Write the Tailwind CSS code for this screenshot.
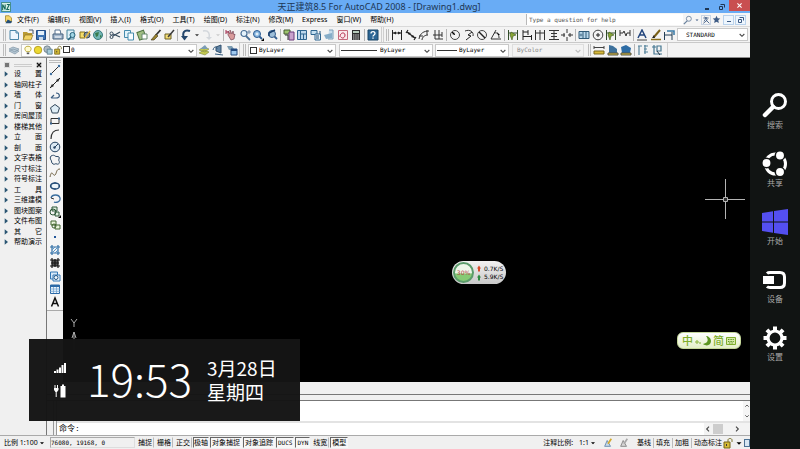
<!DOCTYPE html>
<html lang="zh-CN">
<head>
    <meta charset="UTF-8">
    <meta name="viewport" content="width=device-width, initial-scale=1.0">
    <title>天正建筑8.5 For AutoCAD 2008 - [Drawing1.dwg]</title>
    <script src="https://cdn.jsdelivr.net/npm/@tailwindcss/browser@4"></script>
</head>
<body class="h-screen flex overflow-hidden bg-black text-[7px] leading-[10px] text-black font-['Noto_Sans','Noto_Sans_CJK_SC',sans-serif]">

    <!-- Icon sprite -->
    <svg class="hidden">
        <defs>
            <symbol id="new" viewBox="0 0 12 12"><path d="M2 1.5h6l2.500 2.500v6.500H2z" fill="#eef7fd" stroke="#4a86a8"/><path d="M8 1.500v2.500h2.500" fill="none" stroke="#4a86a8"/></symbol>
            <symbol id="open" viewBox="0 0 12 12"><path d="M1 3h4l1 1h4v6H1z" fill="#b99a34"/><path d="M3 6h8l-2 5H1z" fill="#f1d263" stroke="#806a20" stroke-width=".6"/><path d="M7 1l4 0v4" fill="none" stroke="#456"/></symbol>
            <symbol id="save" viewBox="0 0 12 12"><path d="M1.500 1.500h9v9h-9z" fill="#3d74b4" stroke="#254e86"/><path d="M3 2h6v4H3z" fill="#e4f0fa"/><path d="M4 8h4v3H4z" fill="#c9d8e8"/></symbol>
            <symbol id="print" viewBox="0 0 12 12"><path d="M3 5V1h5l1 4" fill="#fff" stroke="#56718f"/><path d="M1 5h10v5H1z" fill="#a4b7cd" stroke="#48627f"/><path d="M3 8h6" stroke="#fff"/></symbol>
            <symbol id="preview" viewBox="0 0 12 12"><path d="M2 1h7v9H2z" fill="#dff0f8" stroke="#46839b"/><circle cx="7.500" cy="6" r="2.500" fill="#9fd4e3" stroke="#25617a"/><path d="M6 8l-3 3" stroke="#25617a" stroke-width="1.500"/></symbol>
            <symbol id="publish" viewBox="0 0 12 12"><path d="M1 3h5v6H1z" fill="#f5dd69" stroke="#867421"/><circle cx="8" cy="6" r="3" fill="#7e8e99" stroke="#3b4a55"/><path d="M6 9l5-7" stroke="#e3b944" stroke-width="1.500"/></symbol>
            <symbol id="globe" viewBox="0 0 12 12"><circle cx="6" cy="6" r="4.500" fill="#73b6b4" stroke="#37797f"/><path d="M3 4l4-1-1 4-2 1zM8 6l2 1-2 2z" fill="#387b4d"/></symbol>
            <symbol id="cut" viewBox="0 0 12 12"><path d="M11 3L4 7M11 8L4 5" stroke="#33495c" stroke-width="1.200"/><circle cx="2.500" cy="4.500" r="1.500" fill="none" stroke="#33495c"/><circle cx="2.500" cy="8" r="1.500" fill="none" stroke="#33495c"/></symbol>
            <symbol id="copy" viewBox="0 0 12 12"><path d="M1.500 1.500h6v7h-6z" fill="#e3f3fa" stroke="#458bad"/><path d="M5 4h5.500v7H5z" fill="#f7fcff" stroke="#458bad"/></symbol>
            <symbol id="paste" viewBox="0 0 12 12"><path d="M2 2h7v8H2z" fill="#9fbd82" stroke="#4b713f" transform="rotate(-20 6 6)"/><path d="M6 5h5v5H6z" fill="#fff" stroke="#67896e"/></symbol>
            <symbol id="brush" viewBox="0 0 12 12"><path d="M10.500 1L6 6" stroke="#333" stroke-width="1.800"/><path d="M6 5l2 2-4 4-3 0z" fill="#99822f" stroke="#3d3417" stroke-width=".6"/></symbol>
            <symbol id="edit" viewBox="0 0 12 12"><path d="M2 5h6v5H2z" fill="#f3dc74" stroke="#6d6124"/><path d="M11 1L5 8" stroke="#3a3a3a" stroke-width="1.500"/></symbol>
            <symbol id="undo" viewBox="0 0 12 12"><path d="M10 2C4 0 2 4 4 9" fill="none" stroke="#24466c" stroke-width="2"/><path d="M1 7l7 0-3.500 4.500z" fill="#24466c"/></symbol>
            <symbol id="redo" viewBox="0 0 12 12"><path d="M2 2c6-1 7 3 6 7" fill="none" stroke="#d3d7dc" stroke-width="1.500"/><path d="M5 8h6l-3 3z" fill="#d3d7dc"/></symbol>
            <symbol id="down" viewBox="0 0 12 12"><path d="M3 5h6L6 8z" fill="currentColor"/></symbol>
            <symbol id="chevron" viewBox="0 0 12 12"><path d="M2.500 4.500L6 8l3.500-3.500" fill="none" stroke="currentColor" stroke-width="1.600"/></symbol>
            <symbol id="pan" viewBox="0 0 12 12"><path d="M3 6V2l2 3V1l2 4 1-3 1 4 1-1-1 5-3 1z" fill="#d99a9a" stroke="#7b4857" stroke-width=".7"/><path d="M1 3h3M1 1v4" stroke="#a32a4c"/></symbol>
            <symbol id="zoom" viewBox="0 0 12 12"><circle cx="5" cy="4.500" r="3" fill="#e4f2fb" stroke="#4a6f96" stroke-width="1.200"/><path d="M7 7l4 4" stroke="#4a6f96" stroke-width="1.800"/><path d="M10 1v4M8 3h4" stroke="#4a6f96" stroke-width=".7"/></symbol>
            <symbol id="zoomwin" viewBox="0 0 12 12"><circle cx="5" cy="5" r="3.500" fill="#87b6e0" stroke="#2d5b91"/><path d="M3.500 5h3M5 3.500v3" stroke="#fff"/><path d="M7.500 7.500L10 10" stroke="#2d5b91" stroke-width="1.800"/><path d="M12 9v3H9z"/></symbol>
            <symbol id="zoomprev" viewBox="0 0 12 12"><circle cx="6" cy="5" r="3.500" fill="#9dbed9" stroke="#365f8f"/><path d="M8.500 7.500L11 10" stroke="#365f8f" stroke-width="1.800"/><path d="M9 1L3 4v3" fill="none" stroke="#173d6b" stroke-width="1.500"/></symbol>
            <symbol id="props" viewBox="0 0 12 12"><path d="M1 1h6v4H1z" fill="#9dc36e" stroke="#465c33"/><path d="M6 3h5v8H6z" fill="#c9a3cc" stroke="#6d3c7d"/><path d="M2 6h3v5" fill="none" stroke="#333"/></symbol>
            <symbol id="center" viewBox="0 0 12 12"><path d="M1.500 1.500h9v9h-9z" fill="#bcd7ec" stroke="#2f658f"/><path d="M4.500 1v10M5 5h5M7.500 5v5" stroke="#2f658f"/></symbol>
            <symbol id="palette" viewBox="0 0 12 12"><path d="M1 1.500h6v4H1z" fill="#c4dff0" stroke="#2f658f"/><path d="M5 5h5.500v6H5z" fill="#e8f3fa" stroke="#2f658f"/><path d="M6 7h3M6 9h3M10 2v3" stroke="#1d4d75"/></symbol>
            <symbol id="sheet" viewBox="0 0 12 12"><path d="M6 1l4 0v9H5" fill="#c8ddec" stroke="#7ca0b9"/><path d="M1 6l8-2v5l-6 1z" fill="#86adc8"/></symbol>
            <symbol id="markup" viewBox="0 0 12 12"><path d="M1.500 1.500h9v9h-9z" fill="#fbe8eb" stroke="#c4697b"/><path d="M3 8c0-5 5-5 5-2s-3 4-4 2" fill="none" stroke="#b52c4c"/></symbol>
            <symbol id="calc" viewBox="0 0 12 12"><path d="M2 1h8v10H2z" fill="#2e2e2e"/><path d="M3 2h6v2H3z" fill="#b8ccbc"/><path d="M3 6h6M3 8h6M3 10h6" stroke="#d6d6d6" stroke-dasharray="1.500 .7"/></symbol>
            <symbol id="help" viewBox="0 0 12 12"><path d="M1 1h10v10H1z" fill="#2c6695" stroke="#194466"/><path d="M4 4.500C4 2 8 2 8 4.500 8 6 6 6 6 7.500M6 8.500v1.200" fill="none" stroke="#fff" stroke-width="1.300"/></symbol>
            <symbol id="dimlin" viewBox="0 0 12 12"><path d="M1.500 1v10M10.500 1v10M2 4h8" stroke="#222"/><path d="M2 4l3-1.500v3zM10 4L7 2.500v3z" fill="#222"/></symbol>
            <symbol id="dimali" viewBox="0 0 12 12"><path d="M3 1L1 4M11 8l-2 3M2 3l8 6" stroke="#222" stroke-width="1.200"/><path d="M2 3l4 1-2 2zM10 9L8 6 6 8z" fill="#222"/></symbol>
            <symbol id="dimarc" viewBox="0 0 12 12"><path d="M1 10C2 4 6 2 11 2M4 11c0-3 3-5 6-5" fill="none" stroke="#333"/><path d="M1 7h4M9 1v5" stroke="#333"/></symbol>
            <symbol id="dimord" viewBox="0 0 12 12"><path d="M3 1v9h8M7 1v9M1 6h9M10 3v5" fill="none" stroke="#333"/></symbol>
            <symbol id="dimrad" viewBox="0 0 12 12"><circle cx="6" cy="6" r="4.500" fill="none" stroke="#444"/><path d="M6 6L3 3" stroke="#222"/><path d="M3 3l3 1-2 2z"/></symbol>
            <symbol id="dimjog" viewBox="0 0 12 12"><path d="M2 2c5-2 9 1 8 5" fill="none" stroke="#333"/><path d="M9 3L5 6l3 1-5 4" fill="none" stroke="#222"/></symbol>
            <symbol id="dimdia" viewBox="0 0 12 12"><circle cx="6" cy="6" r="4.500" fill="none" stroke="#444"/><path d="M3 3l6 6" stroke="#222" stroke-width="1.400"/></symbol>
            <symbol id="dimang" viewBox="0 0 12 12"><path d="M6 1L1 10h10M4 4c4-1 5 2 5 5" fill="none" stroke="#333"/><path d="M7 3l3 3H8z"/></symbol>
            <symbol id="dimquick" viewBox="0 0 12 12"><path d="M1.500 1v10M10.500 1v10M2 4h8" stroke="#334c2b"/><path d="M4 3l5 3-3 1-1 4-2-5z" fill="#87a534" stroke="#3c571d" stroke-width=".6"/></symbol>
            <symbol id="dimbase" viewBox="0 0 12 12"><path d="M2 1v10M10.500 6v5M7 1v5M2 3h5M2 7.500h8" stroke="#222"/></symbol>
            <symbol id="dimcont" viewBox="0 0 12 12"><path d="M1.500 1v10M6 1v10M10.500 1v10M2 4h8" stroke="#333"/></symbol>
            <symbol id="dimspace" viewBox="0 0 12 12"><path d="M1 1.500h10M1 10.500h10M3 4.500h6M3 7.500h6M6 2v8" stroke="#333"/></symbol>
            <symbol id="dimbreak" viewBox="0 0 12 12"><path d="M6 0v4M6 8v4M0 6h4M7 6h5M9 4v4M3 4v4" stroke="#333"/></symbol>
            <symbol id="tol" viewBox="0 0 12 12"><path d="M1 2.500h10v7H1z" fill="#b9d8ec" stroke="#315a78"/><path d="M5 2v8M8 2v8" stroke="#315a78"/><circle cx="3" cy="6" r="1" fill="none" stroke="#315a78" stroke-width=".7"/></symbol>
            <symbol id="cmark" viewBox="0 0 12 12"><circle cx="6" cy="6" r="4.800" fill="none" stroke="#444"/><path d="M4 6h4M6 4v4" stroke="#222"/></symbol>
            <symbol id="dimjogl" viewBox="0 0 12 12"><path d="M1 1v6M11 1v6M1 4h3l1-2 2 5 1-3h3" fill="none" stroke="#333"/></symbol>
            <symbol id="dimtedit" viewBox="0 0 12 12"><path d="M2 9L6 1l4 8M4 6h4" fill="none" stroke="#23457c" stroke-width="1.500"/><path d="M1 11h10" stroke="#444"/></symbol>
            <symbol id="dimpen" viewBox="0 0 12 12"><path d="M10 1L4 8" stroke="#7a6118" stroke-width="2"/><path d="M4 6l1 3-3 0z" fill="#222"/><path d="M1 10.500h10" stroke="#8a6f1c" stroke-width="1.500"/></symbol>
            <symbol id="dimupd" viewBox="0 0 12 12"><path d="M1.500 3v8M9 3v8M2 6h7" stroke="#223e55"/><path d="M4 2h7v4" fill="none" stroke="#3779a7" stroke-width="1.500"/></symbol>
            <symbol id="layers" viewBox="0 0 12 12"><path d="M1 7l4-2 6 2-4 3zM1 5l4-2 6 2-4 3z" fill="#b9cbd8" stroke="#7e93a3" stroke-width=".7"/></symbol>
            <symbol id="bulb" viewBox="0 0 12 12"><path d="M4 8C1 5 2 1.500 6 1.500S11 5 8 8z" fill="#fffbd0" stroke="#b39f29"/><path d="M4.500 10h3" stroke="#555" stroke-width="2"/></symbol>
            <symbol id="sun" viewBox="0 0 12 12"><circle cx="6" cy="6" r="4.500" fill="#ecd933" stroke="#b09617"/></symbol>
            <symbol id="vp" viewBox="0 0 12 12"><circle cx="5" cy="5" r="4" fill="#aebac2" stroke="#6a7d88"/><path d="M5 5h6v6H5z" fill="#a6cbd9" stroke="#597b8c"/></symbol>
            <symbol id="lock" viewBox="0 0 12 12"><path d="M6 5V3c0-2 4-2 4 0v2" fill="none" stroke="#79702a"/><path d="M2 5h6v6H2z" fill="#d3bb35" stroke="#776516"/><path d="M4.500 7v2" stroke="#433"/></symbol>
            <symbol id="lset" viewBox="0 0 12 12"><path d="M1 9l5-3 5 2-4 3zM1 6l5-3 5 2-4 3z" fill="#c3c94f" stroke="#7c8540" stroke-width=".6"/><path d="M2 5l5-4 3 4" fill="#7c9db5"/></symbol>
            <symbol id="lprev" viewBox="0 0 12 12"><path d="M4 3l5-2v8l-5-2z" fill="#6185a6" stroke="#33516e"/><path d="M1 6c1-4 4-4 4-1M3 10l8 1" fill="none" stroke="#31587b"/></symbol>
            <symbol id="lstate" viewBox="0 0 12 12"><path d="M1 2l5 0 2 3-5 1z" fill="#7c9cb1"/><path d="M5 5h6v6H5z" fill="#9fc9ef" stroke="#234b80"/><path d="M5 6h6" stroke="#234b80" stroke-width="2"/></symbol>
            <symbol id="dist" viewBox="0 0 12 12"><path d="M1 3.500h10M1 2v3M11 2v3" stroke="#444"/><path d="M1 7h10v3H1z" fill="#d6b93a" stroke="#7b691d"/></symbol>
            <symbol id="area" viewBox="0 0 12 12"><path d="M2 1l4 1 4 3v4H2z" fill="#3d719c"/><path d="M1 9h10v2H1z" fill="#d6b93a" stroke="#554"/></symbol>
            <symbol id="massp" viewBox="0 0 12 12"><path d="M1 3l5-2 5 3-1 5H2z" fill="#2d6ca5"/><path d="M1 9h10v2H1z" fill="#d6b93a" stroke="#554"/></symbol>
            <symbol id="list" viewBox="0 0 12 12"><path d="M2 2v9M1 2h4M7 2h4M7 5h3M7 8h4M8 1v9" stroke="#55839b" stroke-width="1.200"/></symbol>
            <symbol id="locate" viewBox="0 0 12 12"><path d="M3 1v9h8M1 3h4M6 2h4v5H6z" fill="none" stroke="#44768f" stroke-width="1.200"/><path d="M6 7l3 4" stroke="#234"/></symbol>
            <symbol id="line" viewBox="0 0 12 12"><path d="M2 10l8-8" stroke="#333"/><circle cx="2" cy="10" r="1.200" fill="#3d6fa0"/><circle cx="10" cy="2" r="1.200" fill="#3d6fa0"/></symbol>
            <symbol id="xline" viewBox="0 0 12 12"><path d="M1 11L11 1" stroke="#222"/><path d="M11 1L7 3l2 2zM1 11l4-2-2-2z" fill="#222"/></symbol>
            <symbol id="pline" viewBox="0 0 12 12"><path d="M2 8h5c5 0 4-5 0-5M2 8l3-3" fill="none" stroke="#3d5f82" stroke-width="1.200"/></symbol>
            <symbol id="polygon" viewBox="0 0 12 12"><path d="M6 1.500l4.500 3.300-1.700 5.200H3.200L1.500 4.800z" fill="#dfedf5" stroke="#2f4457"/></symbol>
            <symbol id="rect" viewBox="0 0 12 12"><path d="M2 3.500h8v5H2z" fill="none" stroke="#333"/><path d="M1 7.500h2v2H1zM9 2.500h2v2H9z" fill="#35618d"/></symbol>
            <symbol id="arc" viewBox="0 0 12 12"><path d="M2 11C2 5 5 2 10 2" fill="none" stroke="#333" stroke-width="1.200"/></symbol>
            <symbol id="circle" viewBox="0 0 12 12"><circle cx="6" cy="6" r="4.800" fill="#dbe9f3" stroke="#244260"/><path d="M5 7l4-4" stroke="#244260"/><circle cx="5.500" cy="6.500" r="1.200" fill="#244260"/></symbol>
            <symbol id="cloud" viewBox="0 0 12 12"><path d="M2 2c2-1 3-1 4 0s3 0 4 1-1 3 0 4 0 4-2 3-2 1-4 0-1-3-2-4-1-3 0-4z" fill="none" stroke="#2f4b68"/></symbol>
            <symbol id="spline" viewBox="0 0 12 12"><path d="M1 10c2-9 3 0 5-2s1-6 5-6" fill="none" stroke="#6b5c3d"/></symbol>
            <symbol id="ellipse" viewBox="0 0 12 12"><ellipse cx="6" cy="6" rx="4.500" ry="3" fill="#edf5fa" stroke="#234c77" stroke-width="1.300"/><path d="M6 2v2M6 8v2M1 6h2M9 6h2" stroke="#234c77"/></symbol>
            <symbol id="earc" viewBox="0 0 12 12"><path d="M2 5c1-4 8-4 9 0s-4 5-6 4" fill="none" stroke="#3b6f9f" stroke-width="1.300"/><path d="M2 5l3 1" stroke="#333"/></symbol>
            <symbol id="insert" viewBox="0 0 12 12"><path d="M3 1h5v4H3zM6 6h4v4H6z" fill="#dff0df" stroke="#2c5638"/><circle cx="4" cy="6" r="3" fill="none" stroke="#2c5638"/><path d="M12 9v3H9z"/></symbol>
            <symbol id="block" viewBox="0 0 12 12"><path d="M2 2h5v4H2zM6 6h5v4H6z" fill="#eaf4dc" stroke="#40642e"/><circle cx="5" cy="7" r="2" fill="none" stroke="#40642e"/></symbol>
            <symbol id="point" viewBox="0 0 12 12"><path d="M5 5h2v2H5z" fill="#225599"/></symbol>
            <symbol id="hatch" viewBox="0 0 12 12"><path d="M3 1v10M9 1v10M1 3h10M1 9h10" stroke="#2f6da4" stroke-width="1.200"/><path d="M3 9l6-6M3 6l3-3M6 9l3-3" stroke="#5a95c5"/></symbol>
            <symbol id="grad" viewBox="0 0 12 12"><path d="M3 3h6v6H3z" fill="#555"/><path d="M3 1v10M9 1v10M1 3h10M1 9h10M6 2v8M2 6h8" stroke="#181818" stroke-width="1.200"/></symbol>
            <symbol id="region" viewBox="0 0 12 12"><path d="M1.500 2h7v7h-7z" fill="#d7e8f7" stroke="#3277b4"/><path d="M4 5h7v6H4z" fill="#f1f8fd" stroke="#3277b4"/><circle cx="7" cy="7.500" r="2" fill="none" stroke="#235685"/></symbol>
            <symbol id="table" viewBox="0 0 12 12"><path d="M1.500 2h9v8.500h-9z" fill="#e9f3fb" stroke="#2b69a7"/><path d="M1 3h10" stroke="#2b69a7" stroke-width="2"/><path d="M1 6h10M1 8.300h10M4.500 4v6M7.500 4v6" stroke="#75a5d2" stroke-width=".8"/></symbol>
            <symbol id="mtext" viewBox="0 0 12 12"><path d="M2.500 10.500L6 2l3.500 8.500M4 7.500h4" fill="none" stroke="#111" stroke-width="1.500"/></symbol>
            <symbol id="star" viewBox="0 0 12 12"><path d="M6 1l1.500 3.300 3.500.4-2.600 2.400.7 3.600L6 9l-3.100 1.700.7-3.600L1 4.700l3.500-.4z" fill="#3c5a84"/></symbol>
            <symbol id="scale" viewBox="0 0 12 12"><path d="M2 10l3-7 4 7z" fill="#c6d9ea" stroke="#5c82a8"/><path d="M10 1L6 7" stroke="#d2a92f" stroke-width="2"/></symbol>
            <symbol id="tri" viewBox="0 0 12 12"><path d="M4 2l5 4-5 4z" fill="#2b5673"/></symbol>
        </defs>
    </svg>

    <main class="flex-1 min-w-0 flex flex-col bg-[#f0f0f0]">
        <!-- Title bar -->
        <header class="relative h-[13px] shrink-0 flex items-center bg-[#69acf5]">
            <svg class="w-2.5 h-2.5 ml-px" viewBox="0 0 12 12"><path d="M.5.5h11v11H.5z" fill="#d7efe6" stroke="#287a6c"/><path d="M2 10V3l3 6V3M7 3h3L7 9h3" fill="none" stroke="#17695c" stroke-width="1.300"/></svg>
            <h1 class="flex-1 pl-12 text-center text-[9px] leading-3 text-[#1d3654]">天正建筑8.5 For AutoCAD 2008 - [Drawing1.dwg]</h1>
            <button aria-label="最小化" class="w-[15px] h-full flex items-center justify-center"><span class="w-1 h-0.5 mt-1 bg-[#1d3654]"></span></button>
            <button aria-label="还原" class="w-[15px] h-full flex items-center justify-center"><svg class="w-1.5 h-1.5" viewBox="0 0 6 6"><path d="M1.500.5h4v3M.5 2.500h3v3h-3z" fill="none" stroke="#1d3654"/></svg></button>
            <button aria-label="关闭" class="w-[21px] h-[11px] self-start flex items-center justify-center bg-[#c94f50]"><svg class="w-[5px] h-[5px]" viewBox="0 0 6 6"><path d="M.5.5l5 5M5.500.5l-5 5" stroke="#fff" stroke-width="1.300"/></svg></button>
        </header>

        <!-- Menu bar -->
        <nav class="h-[13px] shrink-0 flex items-center bg-[#f5f5f5]">
            <svg class="w-[9px] h-[9px] ml-1 mr-1" viewBox="0 0 12 12"><path d="M2 1h5l3 3v5H2z" fill="#f7d568" stroke="#9b7d22"/><path d="M5 6l6 3-2 2H2z" fill="#254e76"/></svg>
            <div class="flex gap-[9px] whitespace-nowrap">
                <button>文件(F)</button><button>编辑(E)</button><button>视图(V)</button><button>插入(I)</button><button>格式(O)</button><button>工具(T)</button><button>绘图(D)</button><button>标注(N)</button><button>修改(M)</button><button>Express</button><button>窗口(W)</button><button>帮助(H)</button>
            </div>
            <input type="text" aria-label="帮助搜索" placeholder="Type a question for help" class="ml-auto w-[157px] h-[11px] px-0.5 bg-white border-l border-[#b8b8b8] text-[6px] font-['DejaVu_Sans_Mono',monospace] placeholder:text-[#555]">
            <div class="flex items-center gap-px pr-1 text-[#3c5a84]">
                <button aria-label="搜索" class="w-2.5"><svg class="w-2.5 h-2.5" viewBox="0 0 12 12"><circle cx="7" cy="4.500" r="3" fill="none" stroke="#69809c"/><path d="M5 7l-4 4" stroke="#69809c" stroke-width="1.500"/></svg></button>
                <button aria-label="搜索选项"><svg class="w-1.5 h-1.5"><use href="#down"/></svg></button>
                <button aria-label="通讯中心" class="w-2.5 h-2.5 border border-[#c8d4e4]"><svg class="w-2 h-2" viewBox="0 0 12 12"><path d="M2 3h8M4 1l4 5-6 5M6 6l5 5M7 2l-4 6" stroke="#3c5a84" fill="none" stroke-width="1.300"/></svg></button>
                <button aria-label="收藏夹" class="w-2.5"><svg class="w-[9px] h-[9px]"><use href="#star"/></svg></button>
                <button aria-label="最小化图形" class="w-[11px] h-2.5 border border-[#b9d2ec] bg-[#eef6fd] flex items-center justify-center"><span class="w-1 h-px mt-1 bg-[#3c5a84]"></span></button>
                <button aria-label="还原图形" class="w-[11px] h-2.5 border border-[#b9d2ec] bg-[#eef6fd] flex items-center justify-center"><svg class="w-1.5 h-1.5" viewBox="0 0 6 6"><path d="M1.500.5h4v3M.5 2.500h3v3h-3z" fill="none" stroke="#3c5a84"/></svg></button>
            </div>
        </nav>

        <!-- Standard and dimension toolbars -->
        <div class="h-4 shrink-0 flex items-center border-t border-[#d9d9d9] bg-[#f3f3f3]" role="toolbar" aria-label="标准">
            <span class="w-[3px] h-3 mx-[3px] mr-0.5 border-x border-[#bdbdbd]"></span>
            <div class="w-[39px] flex justify-between">
                <button aria-label="新建"><svg class="w-3 h-3"><use href="#new"/></svg></button>
                <button aria-label="打开"><svg class="w-3 h-3"><use href="#open"/></svg></button>
                <button aria-label="保存"><svg class="w-3 h-3"><use href="#save"/></svg></button>
            </div>
            <span class="w-px h-3 mx-0.5 bg-[#b5b5b5]"></span>
            <div class="w-[52px] flex justify-between">
                <button aria-label="打印"><svg class="w-3 h-3"><use href="#print"/></svg></button>
                <button aria-label="打印预览"><svg class="w-3 h-3"><use href="#preview"/></svg></button>
                <button aria-label="发布"><svg class="w-3 h-3"><use href="#publish"/></svg></button>
                <button aria-label="三维"><svg class="w-3 h-3"><use href="#globe"/></svg></button>
            </div>
            <span class="w-px h-3 mx-0.5 bg-[#b5b5b5]"></span>
            <div class="w-[66px] flex justify-between">
                <button aria-label="剪切"><svg class="w-3 h-3"><use href="#cut"/></svg></button>
                <button aria-label="复制"><svg class="w-3 h-3"><use href="#copy"/></svg></button>
                <button aria-label="粘贴"><svg class="w-3 h-3"><use href="#paste"/></svg></button>
                <button aria-label="特性匹配"><svg class="w-3 h-3"><use href="#brush"/></svg></button>
                <button aria-label="块编辑器"><svg class="w-3 h-3"><use href="#edit"/></svg></button>
            </div>
            <span class="w-px h-3 mx-0.5 bg-[#b5b5b5]"></span>
            <div class="w-[42px] flex items-center justify-between text-[#333]">
                <button aria-label="放弃"><svg class="w-3 h-3"><use href="#undo"/></svg></button>
                <button aria-label="放弃列表"><svg class="w-2 h-2"><use href="#down"/></svg></button>
                <button aria-label="重做"><svg class="w-3 h-3"><use href="#redo"/></svg></button>
                <button aria-label="重做列表" class="text-[#ccc]"><svg class="w-2 h-2"><use href="#down"/></svg></button>
            </div>
            <span class="w-px h-3 mx-px bg-[#b5b5b5]"></span>
            <div class="w-[53px] flex justify-between">
                <button aria-label="平移"><svg class="w-3 h-3"><use href="#pan"/></svg></button>
                <button aria-label="实时缩放"><svg class="w-3 h-3"><use href="#zoom"/></svg></button>
                <button aria-label="窗口缩放"><svg class="w-3 h-3"><use href="#zoomwin"/></svg></button>
                <button aria-label="缩放上一个"><svg class="w-3 h-3"><use href="#zoomprev"/></svg></button>
            </div>
            <span class="w-px h-3 mx-0.5 bg-[#b5b5b5]"></span>
            <div class="w-[79px] flex justify-between">
                <button aria-label="特性"><svg class="w-3 h-3"><use href="#props"/></svg></button>
                <button aria-label="设计中心"><svg class="w-3 h-3"><use href="#center"/></svg></button>
                <button aria-label="工具选项板"><svg class="w-3 h-3"><use href="#palette"/></svg></button>
                <button aria-label="图纸集"><svg class="w-3 h-3"><use href="#sheet"/></svg></button>
                <button aria-label="标记集"><svg class="w-3 h-3"><use href="#markup"/></svg></button>
                <button aria-label="计算器"><svg class="w-3 h-3"><use href="#calc"/></svg></button>
            </div>
            <span class="w-px h-3 mx-0.5 bg-[#b5b5b5]"></span>
            <button aria-label="帮助"><svg class="w-3 h-3"><use href="#help"/></svg></button>
            <span class="w-[3px] h-full mx-0.5 border-x border-[#cfcfcf]"></span>
            <span class="w-[3px] h-3 mr-0.5 border-x border-[#bdbdbd]"></span>
            <div class="w-[53px] flex justify-between">
                <button aria-label="线性"><svg class="w-3 h-3"><use href="#dimlin"/></svg></button>
                <button aria-label="对齐"><svg class="w-3 h-3"><use href="#dimali"/></svg></button>
                <button aria-label="弧长"><svg class="w-3 h-3"><use href="#dimarc"/></svg></button>
                <button aria-label="坐标"><svg class="w-3 h-3"><use href="#dimord"/></svg></button>
            </div>
            <span class="w-px h-3 mx-0.5 bg-[#b5b5b5]"></span>
            <div class="w-[53px] flex justify-between">
                <button aria-label="半径"><svg class="w-3 h-3"><use href="#dimrad"/></svg></button>
                <button aria-label="折弯"><svg class="w-3 h-3"><use href="#dimjog"/></svg></button>
                <button aria-label="直径"><svg class="w-3 h-3"><use href="#dimdia"/></svg></button>
                <button aria-label="角度"><svg class="w-3 h-3"><use href="#dimang"/></svg></button>
            </div>
            <span class="w-px h-3 mx-0.5 bg-[#b5b5b5]"></span>
            <div class="w-[66px] flex justify-between">
                <button aria-label="快速标注"><svg class="w-3 h-3"><use href="#dimquick"/></svg></button>
                <button aria-label="基线标注"><svg class="w-3 h-3"><use href="#dimbase"/></svg></button>
                <button aria-label="连续标注"><svg class="w-3 h-3"><use href="#dimcont"/></svg></button>
                <button aria-label="标注间距"><svg class="w-3 h-3"><use href="#dimspace"/></svg></button>
                <button aria-label="标注打断"><svg class="w-3 h-3"><use href="#dimbreak"/></svg></button>
            </div>
            <span class="w-px h-3 mx-0.5 bg-[#b5b5b5]"></span>
            <div class="w-[53px] flex justify-between">
                <button aria-label="公差"><svg class="w-3 h-3"><use href="#tol"/></svg></button>
                <button aria-label="圆心标记"><svg class="w-3 h-3"><use href="#cmark"/></svg></button>
                <button aria-label="检验"><svg class="w-3 h-3"><use href="#dimquick"/></svg></button>
                <button aria-label="折弯线性"><svg class="w-3 h-3"><use href="#dimjogl"/></svg></button>
            </div>
            <span class="w-px h-3 mx-0.5 bg-[#b5b5b5]"></span>
            <div class="w-[39px] flex justify-between">
                <button aria-label="编辑标注"><svg class="w-3 h-3"><use href="#dimtedit"/></svg></button>
                <button aria-label="编辑标注文字"><svg class="w-3 h-3"><use href="#dimpen"/></svg></button>
                <button aria-label="标注更新"><svg class="w-3 h-3"><use href="#dimupd"/></svg></button>
            </div>
            <div class="relative flex-1 min-w-0 h-[13px] ml-0.5 mr-0.5">
                <select aria-label="标注样式" class="appearance-none w-full h-full pl-2 bg-white border border-[#c9c9c9] text-[6px] font-['DejaVu_Sans_Mono',monospace]"><option>STANDARD</option></select>
                <svg class="absolute right-0.5 top-[3px] w-2 h-2 pointer-events-none text-[#444]"><use href="#chevron"/></svg>
            </div>
        </div>

        <!-- Layer and property toolbars -->
        <div class="h-4 shrink-0 flex items-center border-t border-[#c9c9c9] border-b border-b-[#8c8c8c] text-[6px] bg-[#f3f3f3] font-['DejaVu_Sans_Mono',monospace]" role="toolbar" aria-label="图层">
            <span class="w-[3px] h-3 mx-[3px] mr-0.5 border-x border-[#bdbdbd]"></span>
            <button aria-label="图层特性管理器"><svg class="w-3 h-3"><use href="#layers"/></svg></button>
            <div class="relative w-[176px] h-[13px] ml-px">
                <select aria-label="当前图层" class="appearance-none w-full h-full pl-[49px] bg-white border border-[#c9c9c9]"><option>0</option></select>
                <div class="absolute left-0.5 top-px flex items-center pointer-events-none">
                    <svg class="w-2.5 h-2.5"><use href="#bulb"/></svg><svg class="w-2.5 h-2.5"><use href="#sun"/></svg><svg class="w-2.5 h-2.5"><use href="#vp"/></svg><svg class="w-2.5 h-2.5"><use href="#lock"/></svg><span class="w-[7px] h-[7px] border border-[#333]"></span>
                </div>
                <svg class="absolute right-0.5 top-[3px] w-2 h-2 pointer-events-none text-[#444]"><use href="#chevron"/></svg>
            </div>
            <div class="w-10 ml-px flex justify-between">
                <button aria-label="置为当前"><svg class="w-3 h-3"><use href="#lset"/></svg></button>
                <button aria-label="上一个图层"><svg class="w-3 h-3"><use href="#lprev"/></svg></button>
                <button aria-label="图层状态"><svg class="w-3 h-3"><use href="#lstate"/></svg></button>
            </div>
            <span class="w-px h-full mx-px bg-[#cfcfcf]"></span>
            <span class="w-[3px] h-3 mx-0.5 border-x border-[#bdbdbd]"></span>
            <div class="relative w-[88px] h-[13px]">
                <select aria-label="颜色" class="appearance-none w-full h-full pl-2.5 bg-white border border-[#c9c9c9]"><option>ByLayer</option></select>
                <span class="absolute left-0.5 top-[3px] w-[7px] h-[7px] border border-[#333] pointer-events-none"></span>
                <svg class="absolute right-0.5 top-[3px] w-2 h-2 pointer-events-none text-[#444]"><use href="#chevron"/></svg>
            </div>
            <div class="relative w-[94px] h-[13px] ml-[3px]">
                <select aria-label="线型" class="appearance-none w-full h-full pl-10 bg-white border border-[#c9c9c9]"><option>ByLayer</option></select>
                <span class="absolute left-0.5 top-1.5 w-9 h-px bg-[#333] pointer-events-none"></span>
                <svg class="absolute right-0.5 top-[3px] w-2 h-2 pointer-events-none text-[#444]"><use href="#chevron"/></svg>
            </div>
            <div class="relative w-[74px] h-[13px] ml-0.5">
                <select aria-label="线宽" class="appearance-none w-full h-full pl-[23px] bg-white border border-[#c9c9c9]"><option>ByLayer</option></select>
                <span class="absolute left-0.5 top-1.5 w-5 h-px bg-[#333] pointer-events-none"></span>
                <svg class="absolute right-0.5 top-[3px] w-2 h-2 pointer-events-none text-[#444]"><use href="#chevron"/></svg>
            </div>
            <div class="relative w-[72px] h-[13px] ml-[3px]">
                <select disabled aria-label="打印样式" class="appearance-none w-full h-full pl-1 border border-[#dedede] text-[#888]"><option>ByColor</option></select>
                <svg class="absolute right-0.5 top-[3px] w-2 h-2 pointer-events-none text-[#bbb]"><use href="#chevron"/></svg>
            </div>
            <span class="w-[3px] h-3 ml-1 mr-0.5 border-x border-[#bdbdbd]"></span>
            <div class="w-[39px] flex justify-between">
                <button aria-label="距离"><svg class="w-3 h-3"><use href="#dist"/></svg></button>
                <button aria-label="面积"><svg class="w-3 h-3"><use href="#area"/></svg></button>
                <button aria-label="面域特性"><svg class="w-3 h-3"><use href="#massp"/></svg></button>
            </div>
            <span class="w-px h-3 mx-0.5 bg-[#b5b5b5]"></span>
            <div class="w-[26px] flex justify-between">
                <button aria-label="列表"><svg class="w-3 h-3"><use href="#list"/></svg></button>
                <button aria-label="定位点"><svg class="w-3 h-3"><use href="#locate"/></svg></button>
            </div>
            <span class="w-px h-full ml-1 bg-[#cfcfcf]"></span>
        </div>

        <div class="flex-1 min-h-0 flex">
            <!-- Screen menu -->
            <aside class="w-[47px] shrink-0 border-r border-[#777] pt-1">
                <div class="flex items-center px-1">
                    <span class="w-1.5 h-1.5 border border-[#ddd] bg-[#777]"></span>
                    <span class="flex-1 h-[3px] mx-1 border-y border-[#ccc]"></span>
                    <button aria-label="关闭屏幕菜单" class="w-1.5 h-1.5 bg-[#ddd]"><svg class="w-1.5 h-1.5" viewBox="0 0 6 6"><path d="M1 1l4 4M5 1L1 5" stroke="#111" stroke-width="1.300"/></svg></button>
                </div>
                <ul class="h-[178px] mt-px flex flex-col justify-between">
                    <li><button class="flex items-center"><svg class="w-2 h-2 ml-0.5 mr-1"><use href="#tri"/></svg><span class="w-7 flex justify-between"><span>设</span><span>置</span></span></button></li>
                    <li><button class="flex items-center"><svg class="w-2 h-2 ml-0.5 mr-1"><use href="#tri"/></svg>轴网柱子</button></li>
                    <li><button class="flex items-center"><svg class="w-2 h-2 ml-0.5 mr-1"><use href="#tri"/></svg><span class="w-7 flex justify-between"><span>墙</span><span>体</span></span></button></li>
                    <li><button class="flex items-center"><svg class="w-2 h-2 ml-0.5 mr-1"><use href="#tri"/></svg><span class="w-7 flex justify-between"><span>门</span><span>窗</span></span></button></li>
                    <li><button class="flex items-center"><svg class="w-2 h-2 ml-0.5 mr-1"><use href="#tri"/></svg>房间屋顶</button></li>
                    <li><button class="flex items-center"><svg class="w-2 h-2 ml-0.5 mr-1"><use href="#tri"/></svg>楼梯其他</button></li>
                    <li><button class="flex items-center"><svg class="w-2 h-2 ml-0.5 mr-1"><use href="#tri"/></svg><span class="w-7 flex justify-between"><span>立</span><span>面</span></span></button></li>
                    <li><button class="flex items-center"><svg class="w-2 h-2 ml-0.5 mr-1"><use href="#tri"/></svg><span class="w-7 flex justify-between"><span>剖</span><span>面</span></span></button></li>
                    <li><button class="flex items-center"><svg class="w-2 h-2 ml-0.5 mr-1"><use href="#tri"/></svg>文字表格</button></li>
                    <li><button class="flex items-center"><svg class="w-2 h-2 ml-0.5 mr-1"><use href="#tri"/></svg>尺寸标注</button></li>
                    <li><button class="flex items-center"><svg class="w-2 h-2 ml-0.5 mr-1"><use href="#tri"/></svg>符号标注</button></li>
                    <li><button class="flex items-center"><svg class="w-2 h-2 ml-0.5 mr-1"><use href="#tri"/></svg><span class="w-7 flex justify-between"><span>工</span><span>具</span></span></button></li>
                    <li><button class="flex items-center"><svg class="w-2 h-2 ml-0.5 mr-1"><use href="#tri"/></svg>三维建模</button></li>
                    <li><button class="flex items-center"><svg class="w-2 h-2 ml-0.5 mr-1"><use href="#tri"/></svg>图块图案</button></li>
                    <li><button class="flex items-center"><svg class="w-2 h-2 ml-0.5 mr-1"><use href="#tri"/></svg>文件布图</button></li>
                    <li><button class="flex items-center"><svg class="w-2 h-2 ml-0.5 mr-1"><use href="#tri"/></svg><span class="w-7 flex justify-between"><span>其</span><span>它</span></span></button></li>
                    <li><button class="flex items-center"><svg class="w-2 h-2 ml-0.5 mr-1"><use href="#tri"/></svg>帮助演示</button></li>
                </ul>
            </aside>

            <div class="flex-1 min-w-0 flex flex-col">
                <div class="flex-1 min-h-0 flex">
                    <!-- Draw toolbar -->
                    <div class="w-4 shrink-0" role="toolbar" aria-label="绘图">
                        <div class="h-[253px] pt-0.5 pb-0.5 flex flex-col items-center justify-between border-b border-[#aaa] bg-[#f5f5f5]">
                            <span class="w-3 h-[3px] border-y border-[#bdbdbd]"></span>
                            <button aria-label="直线"><svg class="w-3 h-3"><use href="#line"/></svg></button>
                            <button aria-label="构造线"><svg class="w-3 h-3"><use href="#xline"/></svg></button>
                            <button aria-label="多段线"><svg class="w-3 h-3"><use href="#pline"/></svg></button>
                            <button aria-label="正多边形"><svg class="w-3 h-3"><use href="#polygon"/></svg></button>
                            <button aria-label="矩形"><svg class="w-3 h-3"><use href="#rect"/></svg></button>
                            <button aria-label="圆弧"><svg class="w-3 h-3"><use href="#arc"/></svg></button>
                            <button aria-label="圆"><svg class="w-3 h-3"><use href="#circle"/></svg></button>
                            <button aria-label="修订云线"><svg class="w-3 h-3"><use href="#cloud"/></svg></button>
                            <button aria-label="样条曲线"><svg class="w-3 h-3"><use href="#spline"/></svg></button>
                            <button aria-label="椭圆"><svg class="w-3 h-3"><use href="#ellipse"/></svg></button>
                            <button aria-label="椭圆弧"><svg class="w-3 h-3"><use href="#earc"/></svg></button>
                            <button aria-label="插入块"><svg class="w-3 h-3"><use href="#insert"/></svg></button>
                            <button aria-label="创建块"><svg class="w-3 h-3"><use href="#block"/></svg></button>
                            <button aria-label="点"><svg class="w-3 h-3"><use href="#point"/></svg></button>
                            <button aria-label="图案填充"><svg class="w-3 h-3"><use href="#hatch"/></svg></button>
                            <button aria-label="渐变色"><svg class="w-3 h-3"><use href="#grad"/></svg></button>
                            <button aria-label="面域"><svg class="w-3 h-3"><use href="#region"/></svg></button>
                            <button aria-label="表格"><svg class="w-3 h-3"><use href="#table"/></svg></button>
                            <button aria-label="多行文字"><svg class="w-3 h-3"><use href="#mtext"/></svg></button>
                        </div>
                    </div>

                    <!-- Drawing canvas -->
                    <section class="relative flex-1 min-w-0 bg-black" aria-label="绘图区">
                        <svg class="absolute left-1.5 bottom-8 w-2.5 h-8" viewBox="0 0 10 32"><path d="M2 1l3 4 3-4M5 5v4M5 14v18M3 20l2-6 2 6" fill="none" stroke="#aaa"/></svg>
                        <svg class="absolute right-[5px] top-[121px] w-10 h-10" viewBox="0 0 40 40"><path d="M0 20.500h40M20.500 0v40" stroke="#b4b4b4"/><path d="M18.500 18.500h4v4h-4z" fill="#333" stroke="#b4b4b4"/></svg>

                        <div class="absolute right-[244px] top-[203px] w-[54px] h-[23px] pl-px pr-1 flex items-center gap-[3px] rounded-full bg-linear-to-b from-[#f2f2f2] to-[#c9c9c9] text-[6px] leading-2 font-['DejaVu_Sans',sans-serif]">
                            <span class="w-[21px] h-[21px] shrink-0 flex items-center justify-center rounded-full border-2 border-[#5b9b6b] bg-linear-to-b from-[#eef6ea] from-50% to-[#86ca74] to-60% text-[#b24242] text-[6px]">30%</span>
                            <svg class="w-1 h-4 shrink-0" viewBox="0 0 4 16"><path d="M0 3.500L2 .5l2 3H3v3H1v-3z" fill="#d84b2c"/><path d="M0 12.500l2-3 2 3H3v3H1v-3z" fill="#2f8a42"/></svg>
                            <span class="whitespace-nowrap">0.7K/S<br>5.9K/S</span>
                        </div>

                        <div class="absolute right-[9px] bottom-[33px] w-16 h-[17px] px-1 flex items-center justify-between rounded-md border border-[#c5d79b] bg-linear-to-b from-white to-[#e3efc6] text-[11px] leading-3 text-[#7fae2c] font-medium">
                            <button>中</button>
                            <button aria-label="标点"><svg class="w-1.5 h-2" viewBox="0 0 6 8"><circle cx="2" cy="5" r="1.200" fill="none" stroke="#7fae2c"/><path d="M5 5v2" stroke="#7fae2c"/></svg></button>
                            <button aria-label="半角"><svg class="w-2 h-2.5" viewBox="0 0 8 10"><path d="M3 0c3 4 2 7-3 8 4 3 8 1 8-3C8 2 5 0 3 0z" fill="#5c9621"/></svg></button>
                            <button>简</button>
                            <button aria-label="软键盘"><svg class="w-2.5 h-2" viewBox="0 0 10 8"><path d="M.5.5h9v7h-9z" fill="#d7eaa8" stroke="#7fae2c"/><path d="M2 2.500h6M2 4.500h6M3 6h4" stroke="#5c9621" stroke-dasharray="1 .6"/></svg></button>
                        </div>
                    </section>
                </div>

                <!-- Command window -->
                <section class="h-[53px] shrink-0 flex flex-col" aria-label="命令行">
                    <div class="h-[13px] border-b border-[#777]"></div>
                    <div class="h-1.5 border-b border-[#777]"></div>
                    <div class="flex-1 flex pl-1.5">
                        <span class="w-1 border-x border-[#999]"></span>
                        <div class="flex-1 flex flex-col">
                            <div class="flex-1 flex justify-end bg-white border-b-2 border-[#e3e3e3]">
                                <div class="w-[7px] py-0.5 flex flex-col justify-between items-center bg-[#f5f5f5] text-[#444]">
                                    <button aria-label="向上滚动"><svg class="w-1.5 h-1.5 rotate-180"><use href="#chevron"/></svg></button>
                                    <button aria-label="向下滚动"><svg class="w-1.5 h-1.5"><use href="#chevron"/></svg></button>
                                </div>
                            </div>
                            <div class="h-3 flex items-center bg-white">
                                <label for="cmd" class="pl-0.5 text-[8px] font-['Liberation_Mono','Noto_Sans_CJK_SC',monospace]">命令:</label>
                                <input id="cmd" type="text" class="flex-1 min-w-0 h-2.5 outline-none">
                                <div class="w-[46px] h-full flex items-center bg-[#f3f3f3] text-[#444]">
                                    <button aria-label="向左滚动"><svg class="w-2 h-2 rotate-90"><use href="#chevron"/></svg></button>
                                    <span class="w-2.5 h-2.5 ml-px bg-[#cdcdcd]"></span>
                                    <button aria-label="向右滚动" class="ml-2.5"><svg class="w-2 h-2 -rotate-90"><use href="#chevron"/></svg></button>
                                </div>
                            </div>
                        </div>
                    </div>
                </section>
            </div>
        </div>

        <!-- Status bar -->
        <footer class="h-3.5 shrink-0 pl-1 flex items-center border-t border-[#aaa] whitespace-nowrap">
            <button class="w-[46px] flex items-center">比例 1:100<svg class="w-2 h-2"><use href="#down"/></svg></button>
            <span class="w-[85px] h-[11px] mr-px border border-[#ddd] border-t-[#aaa] border-l-[#aaa] text-[6px] font-['DejaVu_Sans_Mono',monospace]">76080, 19168, 0</span>
            <div class="flex items-center gap-px">
                <button aria-pressed="false" class="h-[11px] px-px border border-transparent border-r-[#bbb]">捕捉</button>
                <button aria-pressed="false" class="h-[11px] px-px border border-transparent border-r-[#bbb]">栅格</button>
                <button aria-pressed="false" class="h-[11px] px-px border border-transparent border-r-[#bbb]">正交</button>
                <button aria-pressed="true" class="h-[11px] border border-transparent border-t-[#666] border-l-[#666] bg-[#f7f7f7]">极轴</button>
                <button aria-pressed="true" class="h-[11px] px-px border border-transparent border-t-[#666] border-l-[#666] bg-[#f7f7f7]">对象捕捉</button>
                <button aria-pressed="true" class="h-[11px] px-px border border-transparent border-t-[#666] border-l-[#666] bg-[#f7f7f7]">对象追踪</button>
                <button aria-pressed="true" class="h-[11px] px-px border border-transparent border-t-[#666] border-l-[#666] bg-[#f7f7f7] text-[6px] font-['DejaVu_Sans_Mono',monospace]">DUCS</button>
                <button aria-pressed="true" class="h-[11px] px-px border border-transparent border-t-[#666] border-l-[#666] bg-[#f7f7f7] text-[6px] font-['DejaVu_Sans_Mono',monospace]">DYN</button>
                <button aria-pressed="false" class="h-[11px] px-px border border-transparent border-r-[#bbb]">线宽</button>
                <button aria-pressed="true" class="h-[11px] px-px border border-transparent border-t-[#666] border-l-[#666] bg-[#f7f7f7]">模型</button>
            </div>
            <div class="ml-auto flex items-center">
                <span>注释比例:</span>
                <button class="ml-1.5 flex items-center">1:1<svg class="w-2 h-2"><use href="#down"/></svg></button>
                <button aria-label="注释可见性" class="ml-1.5"><svg class="w-2.5 h-2.5"><use href="#scale"/></svg></button>
                <button aria-label="自动缩放" class="mx-1.5 grayscale"><svg class="w-2.5 h-2.5"><use href="#scale"/></svg></button>
                <button class="px-0.5 border-r border-[#bbb]">基线</button>
                <button class="px-0.5 border-r border-[#bbb]">填充</button>
                <button class="px-0.5 border-r border-[#bbb]">加粗</button>
                <button class="pl-0.5">动态标注</button>
                <button aria-label="锁定"><svg class="w-3 h-3"><use href="#lock"/></svg></button>
                <button aria-label="状态栏菜单"><svg class="w-2.5 h-2.5"><use href="#down"/></svg></button>
                <button aria-label="全屏显示" class="w-1.5 h-2 border border-[#4b7194] bg-[#d7e6f2]"></button>
            </div>
        </footer>
    </main>

    <!-- Charms bar -->
    <nav class="w-[50px] shrink-0 pt-1.5 flex flex-col items-center justify-center gap-5 bg-[#111413] text-[8px] leading-3 text-[#a8a8a8]">
        <button class="flex flex-col items-center"><svg class="w-[26px] h-[26px]" viewBox="0 0 26 26"><circle cx="16.500" cy="8.500" r="7" fill="none" stroke="#fff" stroke-width="3"/><path d="M11 14L3 22" stroke="#fff" stroke-width="4.500" stroke-linecap="round"/></svg>搜索</button>
        <button class="flex flex-col items-center"><svg class="w-[26px] h-[26px]" viewBox="0 0 26 26"><circle cx="13.500" cy="13" r="10" fill="none" stroke="#fff" stroke-width="3"/><g fill="#fff" stroke="#111413" stroke-width="1.500"><circle cx="18" cy="4.500" r="4.700"/><circle cx="4.500" cy="12" r="4.700"/><circle cx="18" cy="21" r="4.700"/></g></svg>共享</button>
        <button class="flex flex-col items-center"><svg class="w-[26px] h-[26px]" viewBox="0 0 26 26"><path d="M0 4l11-1.700V12.500H0zM12 2.100L26 0v12.500H12zM0 13.500h11v10.200L0 22zM12 13.500h14V26l-14-2.100z" fill="#544ff0"/></svg>开始</button>
        <button class="flex flex-col items-center"><svg class="w-[26px] h-[26px]" viewBox="0 0 26 26"><path d="M5 6.500C6 5.500 7 5.500 8 5.500h10c3 0 4.500 1.500 4.500 4.500v6c0 3-1.500 4.500-4.500 4.500H8c-1 0-2 0-3-1" fill="none" stroke="#fff" stroke-width="3"/><path d="M1 9h11v8H1z" fill="#fff"/></svg>设备</button>
        <button class="flex flex-col items-center"><svg class="w-[26px] h-[26px]" viewBox="0 0 26 26"><circle cx="13" cy="13" r="7" fill="none" stroke="#fff" stroke-width="3.200"/><g stroke="#fff" stroke-width="4"><path d="M13 1.500v4M13 20.500v4M1.500 13h4M20.500 13h4"/><path d="M4.900 4.900l2.800 2.800M18.300 18.300l2.800 2.800M4.900 21.100l2.800-2.800M18.300 7.700l2.800-2.800"/></g></svg>设置</button>
    </nav>

    <!-- Clock overlay -->
    <section class="absolute left-[29px] bottom-7 w-[271px] h-[82px] pl-6 flex items-center bg-[#141414]/98 text-white font-['Noto_Sans_CJK_SC',sans-serif]">
        <div class="w-3.5 flex flex-col items-center gap-2.5">
            <svg class="w-3 h-3" viewBox="0 0 12 12"><path d="M0 11h2V9H0zM2.500 11h2V7.500h-2zM5 11h2V5.500H5zM7.500 11h2v-8h-2zM10 11h2V1h-2z" fill="#fff"/></svg>
            <svg class="w-3 h-3.5" viewBox="0 0 12 14"><path d="M6.500 2H8V.5h2V2h1.500v11.500h-5z" fill="#fff"/><path d="M1 1v3M3.500 1v3M2.200 6v7" stroke="#fff"/><path d="M0 4h4.500v2L3 8H1.500L0 6z" fill="#fff"/></svg>
        </div>
        <time class="w-[106px] ml-5 pb-1 text-[44px] leading-[48px] font-light">19:53</time>
        <div class="ml-3.5 text-[19px] leading-6 whitespace-nowrap">
            <p>3月28日</p>
            <p>星期四</p>
        </div>
    </section>
</body>
</html>
